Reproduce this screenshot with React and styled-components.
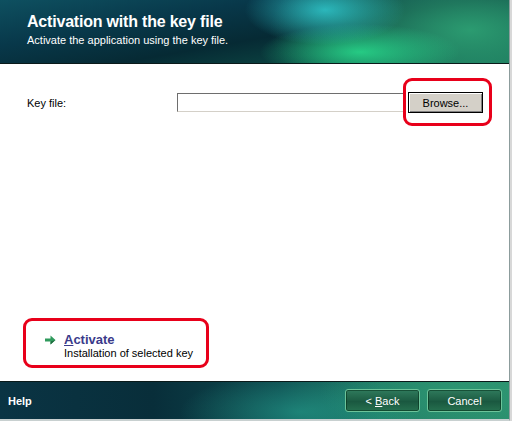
import React from "react";
import styled, { createGlobalStyle } from "styled-components";

const FONT = `"Liberation Sans", Tahoma, Arial, sans-serif`;

const Global = createGlobalStyle`
  html, body { margin: 0; padding: 0; background: #ffffff; overflow: hidden; }
  body { font-family: ${FONT}; }
`;

const Frame = styled.div`
  width: 512px;
  height: 421px;
  box-sizing: border-box;
  border-right: 2px solid #d8d8d8;
  display: flex;
  flex-direction: column;
  background: #ffffff;
`;

const Inner = styled.div`
  flex: 1;
  display: flex;
  flex-direction: column;
  border-right: 1px solid #8c9c9c;
  border-bottom: 2px solid #c8d0d0;
`;

const Header = styled.header`
  box-sizing: border-box;
  height: 64px;
  border-bottom: 1px solid #0a1a1a;
  padding: 13px 0 0 27px;
  color: #ffffff;
  background:
    radial-gradient(ellipse 80px 35px at 325px 10px, rgba(50, 210, 215, 0.8), rgba(50, 210, 215, 0) 100%),
    radial-gradient(ellipse 100px 28px at 360px 52px, rgba(40, 220, 140, 0.85), rgba(40, 220, 140, 0) 100%),
    radial-gradient(ellipse 200px 90px at 470px 30px, rgba(45, 160, 115, 0.95), rgba(45, 160, 115, 0) 100%),
    linear-gradient(170deg, #0e5060 0%, #08384a 30%, #062a34 55%, #126050 100%);
  background-color: #0a3a48;
`;

const Title = styled.h1`
  margin: 0;
  font-family: ${FONT};
  font-size: 16px;
  font-weight: bold;
  letter-spacing: -0.2px;
  line-height: 18px;
`;

const Subtitle = styled.p`
  margin: 2px 0 0;
  font-size: 11px;
  line-height: 14px;
`;

const Content = styled.main`
  flex: 1;
  display: flex;
  flex-direction: column;
  justify-content: space-between;
  padding: 28px 0 21px 27px;
  background: #ffffff;
`;

const FieldRow = styled.div`
  display: flex;
  align-items: center;
`;

const Label = styled.label`
  width: 150px;
  font-size: 11px;
  color: #000000;
`;

const Input = styled.div`
  width: 227px;
  height: 19px;
  box-sizing: border-box;
  border-top: 1px solid #6e6e6e;
  border-left: 1px solid #6e6e6e;
  border-right: 1px solid #d4d0c8;
  border-bottom: 1px solid #d4d0c8;
  background: #ffffff;
`;

const Highlight = styled.div`
  position: relative;
  margin-left: ${(p) => p.$ml}px;
  align-self: flex-start;
  &::after {
    content: "";
    position: absolute;
    left: ${(p) => p.$l}px;
    right: ${(p) => p.$r}px;
    top: ${(p) => p.$t}px;
    bottom: ${(p) => p.$b}px;
    border: 3px solid #e8001a;
    border-radius: 9px;
    pointer-events: none;
  }
`;

const FieldHighlight = styled(Highlight)`
  align-self: center;
`;

const ClassicButton = styled.button`
  width: 75px;
  height: 21px;
  padding: 0;
  font-family: ${FONT};
  font-size: 11px;
  color: #000000;
  background: #d4d0c8;
  border: 1px solid #000000;
  box-shadow: inset 1px 1px 0 #ffffff, inset -1px -1px 0 #808080;
`;

const ActionBlock = styled.div`
  display: flex;
  align-items: flex-start;
  gap: 8px;
  padding-left: 18px;
`;

const ArrowIcon = styled.svg`
  width: 11px;
  height: 10px;
  margin-top: 3px;
`;

const ActionText = styled.div`
  display: flex;
  flex-direction: column;
`;

const ActionLink = styled.span`
  font-size: 13px;
  font-weight: bold;
  color: #3a3a8a;
  line-height: 15px;
  & u { text-decoration-thickness: 1px; text-underline-offset: 1px; }
`;

const ActionNote = styled.span`
  font-size: 11px;
  color: #000000;
  line-height: 13px;
`;

const Footer = styled.footer`
  height: 38px;
  box-sizing: border-box;
  border-top: 1px solid #0a1a1a;
  display: flex;
  align-items: center;
  padding: 0 7px 0 8px;
  color: #ffffff;
  background:
    radial-gradient(ellipse 120px 40px at 300px 30px, rgba(40, 170, 150, 0.55), rgba(40, 170, 150, 0) 100%),
    radial-gradient(ellipse 140px 50px at 460px 10px, rgba(50, 160, 120, 0.6), rgba(50, 160, 120, 0) 100%),
    linear-gradient(90deg, #0a3444 0%, #082e3a 30%, #0e4a4e 55%, #1f7c66 75%, #2a8c6c 100%);
`;

const HelpLabel = styled.span`
  flex: 1;
  font-size: 11px;
  font-weight: bold;
`;

const NavButtons = styled.div`
  display: flex;
  gap: 7px;
`;

const NavButton = styled.button`
  width: 75px;
  height: 23px;
  padding: 0;
  font-family: ${FONT};
  font-size: 11px;
  color: #ffffff;
  border: 1px solid #6cc49a;
  border-radius: 3px;
  background: linear-gradient(180deg, #2f7a5c 0%, #1f6046 45%, #1a5840 55%, #26704f 100%);
  box-shadow: inset 0 0 0 1px rgba(0, 40, 20, 0.5);
`;

const Arrow = () => (
  <ArrowIcon viewBox="0 0 11 10">
    <path d="M0 3.5h5.5V0.5L10.5 5 5.5 9.5V6.5H0z" fill="#2f9a5c" />
    <path d="M5.5 6.5V9.5L10.5 5z" fill="#1f6e40" />
  </ArrowIcon>
);

export default function App() {
  return (
    <>
      <Global />
      <Frame>
        <Inner>
          <Header>
            <Title>Activation with the key file</Title>
            <Subtitle>Activate the application using the key file.</Subtitle>
          </Header>
          <Content>
            <FieldRow>
              <Label>Key file:</Label>
              <Input />
              <FieldHighlight $ml={4} $l={-5} $r={-9} $t={-14} $b={-13}>
                <ClassicButton>Browse...</ClassicButton>
              </FieldHighlight>
            </FieldRow>
            <Highlight $ml={0} $l={-4} $r={-16} $t={-14} $b={-8}>
              <ActionBlock>
                <Arrow />
                <ActionText>
                  <ActionLink><u>A</u>ctivate</ActionLink>
                  <ActionNote>Installation of selected key</ActionNote>
                </ActionText>
              </ActionBlock>
            </Highlight>
          </Content>
          <Footer>
            <HelpLabel>Help</HelpLabel>
            <NavButtons>
              <NavButton>&lt; <u>B</u>ack</NavButton>
              <NavButton>Cancel</NavButton>
            </NavButtons>
          </Footer>
        </Inner>
      </Frame>
    </>
  );
}
